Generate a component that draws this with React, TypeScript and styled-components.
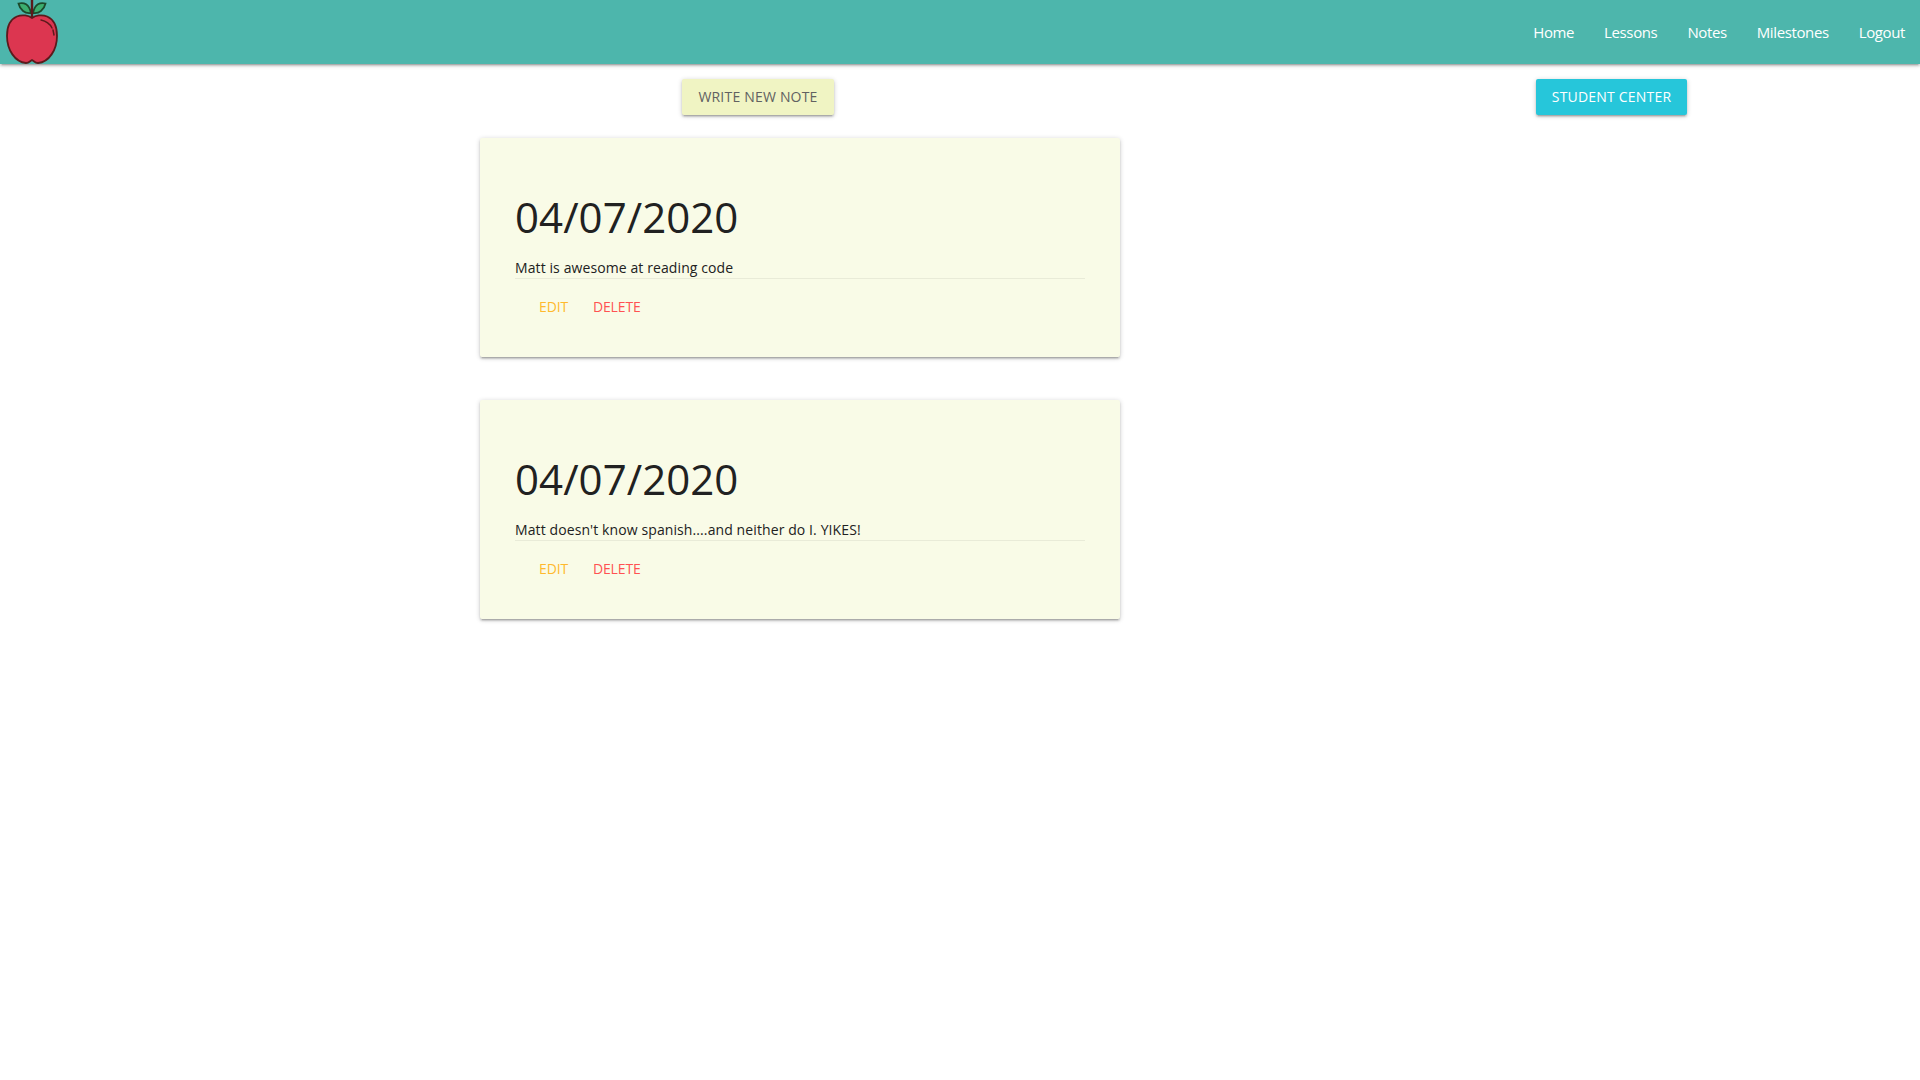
import React from "react";
import styled, { createGlobalStyle } from "styled-components";

const Global = createGlobalStyle`
  html, body { margin: 0; padding: 0; background: #fff; }
  body { font-family: "Open Sans", "Noto Sans", "Liberation Sans", sans-serif; color: #212121; }
  #root { min-height: 1080px; }
`;

const Nav = styled.nav`
  height: 64px;
  background: #4db6ac;
  display: flex;
  align-items: center;
  justify-content: space-between;
  box-shadow: 0 2px 2px 0 rgba(0,0,0,.14), 0 3px 1px -2px rgba(0,0,0,.12), 0 1px 5px 0 rgba(0,0,0,.2);
  position: relative;
`;
const Logo = styled.svg`
  width: 64px;
  height: 64px;
  display: block;
`;
const Links = styled.ul`
  display: flex;
  list-style: none;
  margin: 0;
  padding: 0 15px 0 0;
  gap: 30px;
`;
const LinkItem = styled.li`
  color: #fff;
  font-size: 15px;
  letter-spacing: -0.38px;
  line-height: 64px;
`;
const ButtonRow = styled.div`
  display: flex;
  height: 36px;
  margin-top: 15px;
  padding-left: 682px;
`;
const Btn = styled.div<{ $bg: string; $fg: string; $w: number; $ml?: number }>`
  width: ${p => p.$w}px;
  margin-left: ${p => p.$ml ?? 0}px;
  height: 36px;
  padding-bottom: 1px;
  box-sizing: border-box;
  background: ${p => p.$bg};
  color: ${p => p.$fg};
  border-radius: 2px;
  display: flex;
  align-items: center;
  justify-content: center;
  font-size: 14px;
  letter-spacing: .2px;
  box-shadow: 0 2px 2px 0 rgba(0,0,0,.14), 0 3px 1px -2px rgba(0,0,0,.12), 0 1px 5px 0 rgba(0,0,0,.2);
`;
const Cards = styled.main`
  display: flex;
  flex-direction: column;
  gap: 43px;
  width: 640px;
  margin: 23px 0 0 480px;
`;
const Card = styled.article`
  height: 219px;
  box-sizing: border-box;
  background: #f9fbe7;
  border-radius: 2px;
  padding: 55px 35px 0;
  box-shadow: 0 2px 2px 0 rgba(0,0,0,.14), 0 3px 1px -2px rgba(0,0,0,.12), 0 1px 5px 0 rgba(0,0,0,.2);
`;
const DateTitle = styled.h2`
  margin: 0;
  font-weight: 400;
  font-size: 42px;
  line-height: 48px;
  letter-spacing: 0.05px;
  color: #212121;
`;
const Body = styled.p`
  margin: 17px 0 0;
  font-size: 14px;
  line-height: 20px;
  height: 20px;
  letter-spacing: 0.1px;
  color: #212121;
  border-bottom: 1px solid #e9ebd8;
`;
const Actions = styled.div`
  display: flex;
  gap: 25px;
  padding: 18px 0 0 24px;
  font-size: 14px;
  line-height: 20px;
  letter-spacing: -0.15px;
`;
const Action = styled.span<{ $c: string }>`
  color: ${p => p.$c};
`;

const Apple = () => (
  <Logo viewBox="0 0 64 64">
    <path d="M32 18 C25 13 7 13 7 36 C7 50 15 62 26 63 C29 63 30 61 32 60 C34 61 35 63 38 63 C49 62 57 50 57 36 C57 13 39 13 32 18 Z" fill="#dc3650" stroke="#5c1a1c" strokeWidth="1.8" />
    <path d="M41 20 C46 21 50 24 52 28 M53 30 L54 35" fill="none" stroke="#5c1a1c" strokeWidth="1.5" strokeLinecap="round" />
    <path d="M31 13 C25 14 20 10 18.500 3.500 C24 2 29 4 31 13 Z" fill="#3cae6f" stroke="#1c4a2c" strokeWidth="1.800" />
    <path d="M33 13 C39 14 44 10 45.500 3.500 C40 2 35 4 33 13 Z" fill="#3cae6f" stroke="#1c4a2c" strokeWidth="1.800" />
    <path d="M32 0 L32 17" stroke="#5c1a1c" strokeWidth="2.400" />
  </Logo>
);

const notes = ["Matt is awesome at reading code", "Matt doesn't know spanish....and neither do I. YIKES!"];

export default function App() {
  return (
    <>
      <Global />
      <Nav>
        <Apple />
        <Links>
          {["Home", "Lessons", "Notes", "Milestones", "Logout"].map(l => <LinkItem key={l}>{l}</LinkItem>)}
        </Links>
      </Nav>
      <ButtonRow>
        <Btn $bg="#f0f4c3" $fg="#616161" $w={152}>WRITE NEW NOTE</Btn>
        <Btn $bg="#26c6da" $fg="#fff" $w={151} $ml={702}>STUDENT CENTER</Btn>
      </ButtonRow>
      <Cards>
        {notes.map((n, i) => (
          <Card key={i}>
            <DateTitle>04/07/2020</DateTitle>
            <Body>{n}</Body>
            <Actions>
              <Action $c="#ffb92e">EDIT</Action>
              <Action $c="#ff5252">DELETE</Action>
            </Actions>
          </Card>
        ))}
      </Cards>
    </>
  );
}
